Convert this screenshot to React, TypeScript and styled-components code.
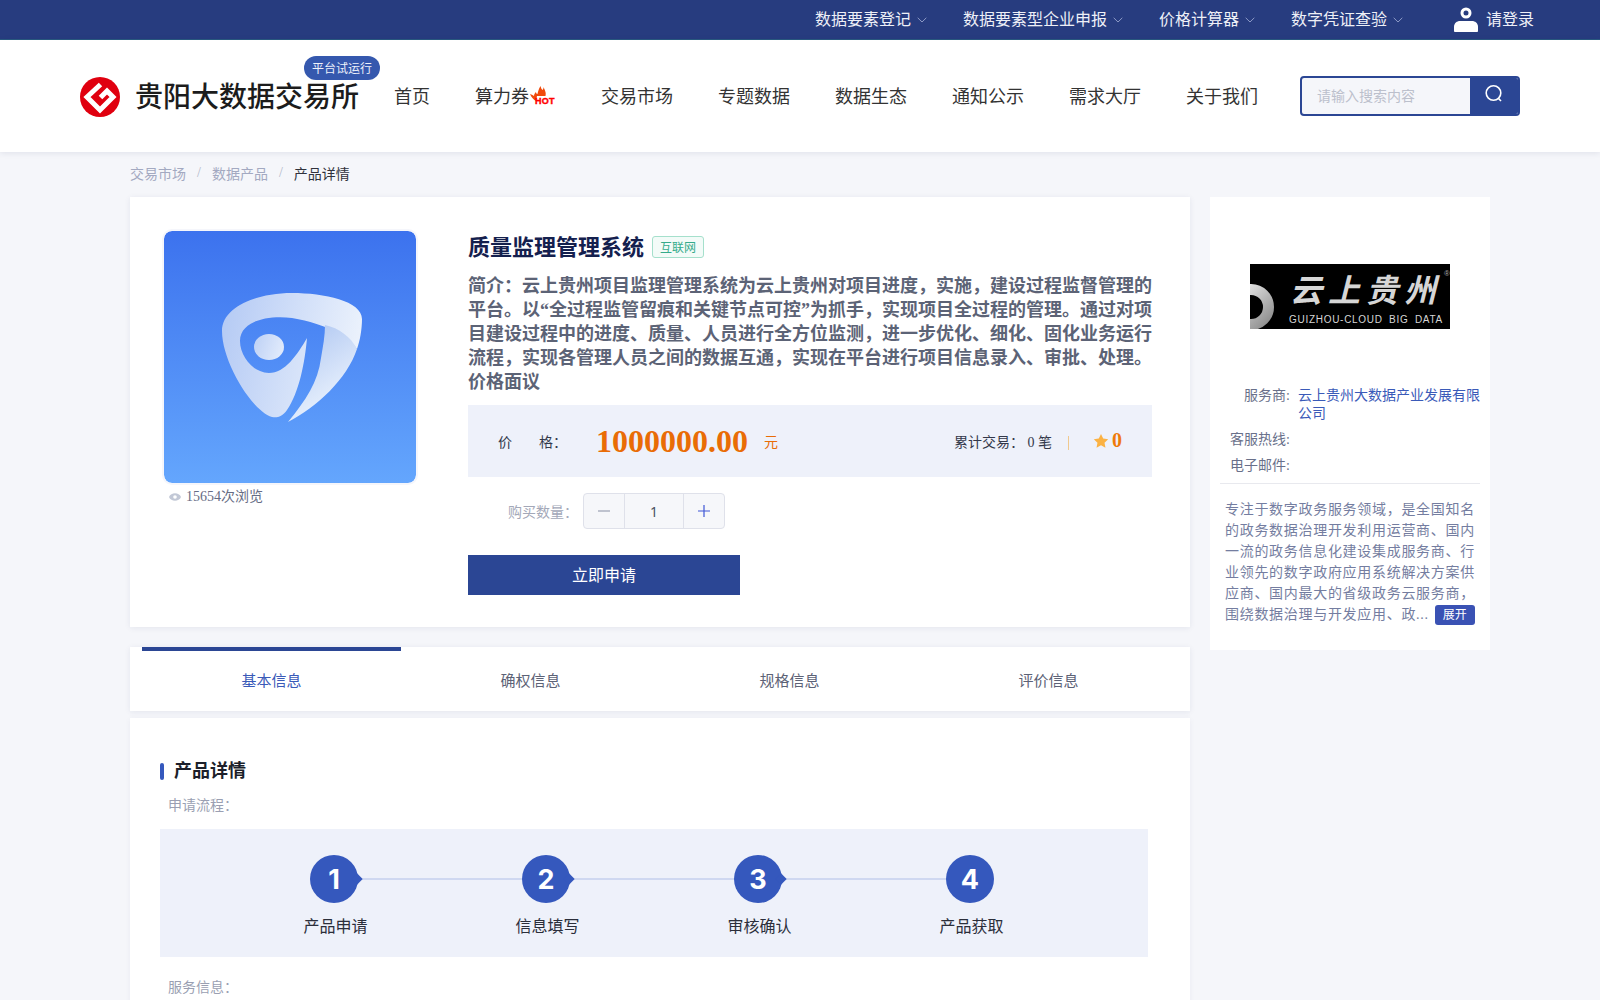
import React from 'react';
import styled, { createGlobalStyle } from 'styled-components';

const Global = createGlobalStyle`
  html, body { margin: 0; padding: 0; background: #f5f6fa; }
  body { font-family: "Liberation Serif", "Noto Sans CJK SC", serif; }
  * { box-sizing: border-box; }
`;
const Page = styled.div`
  width: 1600px; height: 1000px; overflow: hidden; background: #f5f6fa;
`;
const TopBar = styled.div`
  height: 40px; background: #273c7f; border-bottom: 1px solid #2a5a80;
  display: flex; justify-content: flex-end; align-items: center; padding-right: 66px;
`;
const TopItem = styled.div<{ $gap: number }>`
  display: flex; align-items: center; gap: 6px; color: #eef0f7; font-size: 16px; margin-right: ${p => p.$gap}px; line-height: 22px;
`;
const LoginText = styled.span`
  margin-left: 2px;
`;
const Header = styled.header`
  height: 112px; background: #fff; box-shadow: 0 1px 6px rgba(30,40,90,.1);
  display: flex; align-items: center; padding-left: 80px; position: relative;
`;
const LogoWrap = styled.div`
  display: flex; align-items: center; gap: 15px; width: 314px; position: relative; margin-top: 2px;
`;
const LogoText = styled.div`
  font-size: 28px; font-weight: 500; color: #1c1c1c; white-space: nowrap; letter-spacing: 0; margin-top: -5px;
`;
const TrialBadge = styled.span`
  position: absolute; left: 224px; top: -21px; width: 76px; height: 24px; border-radius: 12px;
  background: #3558ae; color: #eef2fb; font-size: 12px; display: flex; align-items: center; justify-content: center;
`;
const Nav = styled.nav`
  display: flex; align-items: center; gap: 45px; font-size: 18px; color: #333; margin-top: -2px;
`;
const NavLink = styled.a<{ $w?: number }>`
  position: relative; white-space: nowrap; ${p => p.$w ? `width: ${p.$w}px;` : ''}
`;
const Hot = styled.span`
  position: absolute; left: 55px; top: 4px; line-height: 0;
`;
const Search = styled.div`
  margin-left: 42px; width: 220px; height: 40px; border: 2px solid #2b4694; border-radius: 4px;
  display: flex; overflow: hidden; background: #f5f6fa;
`;
const SearchInput = styled.div`
  flex: 1; color: #bcc0cc; font-size: 14px; display: flex; align-items: center; padding: 0 0 2px 15px;
`;
const SearchBtn = styled.div`
  width: 48px; background: #2b4694; display: flex; align-items: flex-start; justify-content: center; padding-top: 5px;
`;
const Content = styled.div`
  padding-left: 130px; width: 1490px;
`;
const Crumbs = styled.div`
  height: 45px; display: flex; align-items: center; font-size: 14px; color: #a3a9c1; padding-bottom: 3px;
`;
const Sep = styled.span`
  margin: 0 11px; color: #b4b9ca;
`;
const CrumbNow = styled.span`
  color: #30323c;
`;
const Columns = styled.div`
  display: flex; gap: 20px; align-items: flex-start;
`;
const MainCol = styled.div`
  width: 1060px; display: flex; flex-direction: column;
`;
const ProductCard = styled.section`
  height: 430px; background: #fff; box-shadow: 0 1px 6px rgba(30,40,90,.08);
  display: flex; padding: 34px 38px 0 34px;
`;
const Gallery = styled.div`
  width: 304px; flex: none;
`;
const Views = styled.div`
  display: flex; align-items: center; gap: 5px; color: #666c84; font-size: 14px; margin: 6px 0 0 5px; line-height: 16px;
`;
const Info = styled.div`
  flex: 1; display: flex; flex-direction: column;
`;
const TitleRow = styled.div`
  display: flex; align-items: center; gap: 8px; height: 32px;
`;
const Title = styled.h1`
  margin: -5px 0 0; font-size: 22px; font-weight: 700; color: #14204e;
`;
const Tag = styled.span`
  width: 52px; height: 22px; border: 1px solid #a5e0cc; border-radius: 3px; background: #f3fbf8;
  color: #35ab8b; font-size: 12px; display: flex; align-items: center; justify-content: center;
`;
const Desc = styled.p`
  margin: 11px 0 0; font-size: 18px; line-height: 24px; font-weight: 700; color: #5c6376; height: 120px;
`;
const PriceBar = styled.div`
  margin-top: 11px; height: 72px; background: #eef1fa; display: flex; align-items: center; padding: 0 30px; color: #33384a; font-size: 14px;
`;
const PriceLabel = styled.span`
  width: 98px; display: flex; justify-content: space-between; padding-right: 29px; white-space: nowrap;
`;
const Price = styled.span`
  font-size: 32px; font-weight: 700; color: #e96c06; letter-spacing: 0;
`;
const Unit = styled.span`
  font-size: 14px; color: #e96c06; margin-left: 16px;
`;
const Stats = styled.div`
  margin-left: auto; display: flex; align-items: center; white-space: pre;
`;
const Divider = styled.span`
  width: 1px; height: 14px; background: #f0c98e; margin: 3px 24px 0 16px;
`;
const Score = styled.span`
  display: flex; align-items: center; gap: 3px; color: #ef7a0a; font-size: 20px; font-weight: 700; margin-top: -1px;
`;
const QtyRow = styled.div`
  display: flex; align-items: center; margin: 16px 0 0 40px;
`;
const QtyLabel = styled.span`
  width: 75px; font-size: 14px; color: #a3a8b8;
`;
const Stepper = styled.div`
  width: 142px; height: 36px; border: 1px solid #dfe1ea; border-radius: 4px; background: #f6f7fa; display: flex;
`;
const StepBtn = styled.div`
  width: 40px; display: flex; align-items: center; justify-content: center;
`;
const StepVal = styled.div`
  flex: 1; border-left: 1px solid #dfe1ea; border-right: 1px solid #dfe1ea; display: flex; align-items: center; justify-content: center;
  font-size: 14px; color: #4a4f60; font-family: "Noto Sans", sans-serif;
`;
const Apply = styled.button`
  margin-top: 26px; width: 272px; height: 40px; background: #2b4694; border: 0; color: #fff; font-size: 16px; font-family: inherit; padding: 0 0 2px;
`;
const Tabs = styled.div`
  margin-top: 20px; height: 64px; background: #fff; box-shadow: 0 1px 6px rgba(30,40,90,.08); display: flex; padding: 0 12px;
`;
const TabItem = styled.div<{ $on?: boolean }>`
  flex: 1; border-top: 4px solid ${p => p.$on ? '#2b4694' : 'transparent'}; color: ${p => p.$on ? '#3a5ab8' : '#5c6276'};
  font-size: 15px; display: flex; align-items: center; justify-content: center; padding-bottom: 3px;
`;
const Detail = styled.section`
  margin-top: 7px; height: 400px; background: #fff; padding: 43px 30px 0 30px; box-shadow: 0 1px 6px rgba(30,40,90,.05);
`;
const SectionTitle = styled.h2`
  margin: 0; font-size: 18px; font-weight: 700; color: #1c1f2a; display: flex; align-items: center; gap: 10px; line-height: 20px;
  &::before { content: ''; width: 4px; height: 17px; background: #3558bd; border-radius: 2px; }
`;
const SubLabel = styled.div<{ $top: number }>`
  margin: ${p => p.$top}px 0 0 8px; font-size: 14px; color: #9a9fb2; line-height: 20px;
`;
const Flow = styled.div`
  margin-top: 13px; width: 988px; height: 128px; background: #eef1fa; display: flex; padding: 26px 0 0 68px;
`;
const Step = styled.div<{ $line: boolean }>`
  width: 212px; display: flex; flex-direction: column; align-items: center; position: relative;
  ${p => p.$line ? `&::after { content: ''; position: absolute; left: 130px; width: 188px; top: 23px; height: 2px; background: #cfd8f1; }` : ''}
`;
const Circle = styled.div<{ $tip: boolean }>`
  width: 48px; height: 48px; border-radius: 50%; background: #3558bd; color: #fff; position: relative; z-index: 1;
  display: flex; align-items: center; justify-content: center; font: 700 27px "Inter", "Liberation Sans", sans-serif;
  ${p => p.$tip ? `&::after { content: ''; position: absolute; right: -3px; top: 20px; width: 8px; height: 8px; background: #3558bd; transform: rotate(45deg); }` : ''}
`;
const StepName = styled.div`
  margin: 14px 0 0 3px; font-size: 16px; color: #2b2e3a; line-height: 20px;
`;
const Side = styled.aside`
  width: 280px; height: 453px; background: #fff; padding: 67px 10px 0 10px; display: flex; flex-direction: column;
`;
const SideLogo = styled.div`
  margin-left: 30px; width: 200px; height: 65px; background: #000; position: relative; overflow: hidden; color: #d6d6d6;
  display: flex; flex-direction: column; align-items: center; padding: 5px 0 0 32px;
`;
const SideLogoCn = styled.div`
  font-size: 32px; line-height: 44px; letter-spacing: 6px; font-weight: 700; font-style: italic; white-space: nowrap;
`;
const SideLogoEn = styled.div`
  font: 10px/14px "Liberation Sans", sans-serif; letter-spacing: .7px; white-space: nowrap; word-spacing: 3px;
`;
const Ring = styled.svg`
  position: absolute; left: 0; bottom: 0;
`;
const Reg = styled.span`
  position: absolute; right: 0; top: 5px; font: 8px "Liberation Sans", sans-serif; color: #aaa;
`;
const Facts = styled.dl`
  margin: 58px 0 0; padding: 0 0 8px; border-bottom: 1px solid #e8e9ee; display: grid; grid-template-columns: 70px 1fr; column-gap: 8px; row-gap: 8px; font-size: 14px; line-height: 18px;
`;
const FactKey = styled.dt`
  text-align: right; color: #69708a;
`;
const FactVal = styled.dd`
  margin: 0; color: #3a5ab8; min-height: 18px;
`;
const About = styled.p`
  margin: 15px 0 0 5px; width: 254px; font-size: 14px; line-height: 21px; letter-spacing: .7px; color: #747da0;
`;
const More = styled.span`
  display: inline-flex; vertical-align: top; margin: 1px 0 0 6px; width: 40px; height: 20px; border-radius: 3px; background: #3a52b4; color: #fff; font-size: 12px; letter-spacing: 0;
  align-items: center; justify-content: center; line-height: 1;
`;

const Caret = () => (
  <svg width="10" height="6" viewBox="0 0 10 6" fill="none"><path d="M.7.8 5 5 9.3.8" stroke="#8d9ac6" strokeWidth="1" /></svg>
);
const User = () => (
  <svg width="24" height="26" viewBox="0 0 24 26"><circle cx="12" cy="6" r="4" fill="none" stroke="#fff" strokeWidth="3" /><path d="M1 25c-.5 0-1-.5-1-1v-4c0-4 3-6 6-6h12c3 0 6 2 6 6v4c0 .5-.5 1-1 1z" fill="#fff" /></svg>
);
const GLogo = () => (
  <svg width="40" height="40" viewBox="0 0 40 40">
    <circle cx="20" cy="20" r="20" fill="#e0000f" />
    <path d="M20.500 7.500 7 20l13 13 13-13-6-6-6.500 6.500" fill="none" stroke="#fff" strokeWidth="5" />
  </svg>
);
const Flame = () => (
  <svg width="26" height="20" viewBox="0 0 26 20">
    <path d="M0 8c2 1 3 1 4 2 0-2 1-3 2-4 0 1 .5 2 1.500 2 .5-2 1-5 3-8 .5 2 1 3 2 4 1-1 1-2 1-3 1 3 3 5 2 9H7l-1 5C4 14 1 11 0 8z" fill="#f04a0c" />
    <text x="5" y="18" fontFamily="Liberation Sans, sans-serif" fontWeight="700" fontSize="9" fill="#f00" stroke="#f00" strokeWidth=".4" letterSpacing=".3">HOT</text>
  </svg>
);
const Mag = () => (
  <svg width="22" height="22" viewBox="0 0 22 22" fill="none"><circle cx="10.500" cy="10" r="7.300" stroke="#fff" strokeWidth="1.600" /><path d="m15.500 15.500 2.500 2.500" stroke="#fff" strokeWidth="1.600" /></svg>
);
const Minus = () => (
  <svg width="12" height="12" viewBox="0 0 12 12"><path d="M0 6h12" stroke="#9aa0b2" strokeWidth="1.200" /></svg>
);
const Plus = () => (
  <svg width="12" height="12" viewBox="0 0 12 12"><path d="M0 6h12M6 0v12" stroke="#3f57d6" strokeWidth="1.200" /></svg>
);
const ProductArt = () => (
  <svg width="252" height="252" viewBox="0 0 252 252" style={{ display: 'block', borderRadius: 8, outline: '2px solid #f5f6fb' }}>
    <defs>
      <linearGradient id="bg" x1="0" y1="0" x2="0" y2="1"><stop offset="0" stopColor="#3c72ee" /><stop offset="1" stopColor="#64a6fd" /></linearGradient>
      <linearGradient id="a" x1="0" y1="0" x2="1" y2=".2"><stop offset="0" stopColor="#b3c9f4" /><stop offset="1" stopColor="#eaf1fc" /></linearGradient>
      <linearGradient id="b" x1="0" y1="0" x2=".5" y2="1"><stop offset="0" stopColor="#a9c2f0" /><stop offset="1" stopColor="#eef5fe" /></linearGradient>
      <linearGradient id="c" x1="0" y1="0" x2="1" y2=".3"><stop offset="0" stopColor="#bcd0f5" /><stop offset="1" stopColor="#dfe9fb" /></linearGradient>
    </defs>
    <rect width="252" height="252" fill="url(#bg)" />
    <g style={{ filter: 'blur(.6px)' }}>
      <path d="M58 100C58 76 92 62 128 62c32 0 70 8 70 26 0 10-2 22-5 30-8-12-30-25-65-31-22-3-52 2-52 23 0 16 14 32 29 32 16 0 28-18 38-35-2 24-8 55-20 72-5 7-10 8-15 7-20-6-50-55-50-86z" fill="url(#a)" />
      <path d="M161 94c14 3 26 12 32 24-10 30-40 58-69 73 18-22 30-40 33-64 2-12 4-22 4-33z" fill="url(#b)" />
      <ellipse cx="105" cy="116" rx="15" ry="13" fill="url(#c)" />
    </g>
  </svg>
);
const Eye = () => (
  <svg width="12" height="8" viewBox="0 0 12 8"><path d="M0 4c2-5 10-5 12 0-2 5-10 5-12 0z" fill="#c2c8d6" /><circle cx="6" cy="4" r="1.800" fill="#fff" /></svg>
);
const Star = () => (
  <svg width="16" height="16" viewBox="0 0 24 24"><path d="m12 1.500 3.300 6.900 7.500 1-5.500 5.200 1.400 7.500L12 18.400l-6.700 3.700 1.400-7.500L1.200 9.400l7.500-1z" fill="#fbb243" /></svg>
);

const topItems = [
  { t: '数据要素登记', g: 36 }, { t: '数据要素型企业申报', g: 36 }, { t: '价格计算器', g: 36 }, { t: '数字凭证查验', g: 51 },
];
const navItems = ['首页', '算力券', '交易市场', '专题数据', '数据生态', '通知公示', '需求大厅', '关于我们'];
const tabs = ['基本信息', '确权信息', '规格信息', '评价信息'];
const steps = ['产品申请', '信息填写', '审核确认', '产品获取'];

export default function App() {
  return (
    <Page>
      <Global />
      <TopBar>
        {topItems.map(i => <TopItem key={i.t} $gap={i.g}>{i.t}<Caret /></TopItem>)}
        <TopItem $gap={0}><User /><LoginText>请登录</LoginText></TopItem>
      </TopBar>
      <Header>
        <LogoWrap>
          <GLogo />
          <LogoText>贵阳大数据交易所</LogoText>
          <TrialBadge>平台试运行</TrialBadge>
        </LogoWrap>
        <Nav>
          {navItems.map(n => (
            <NavLink key={n} $w={n === '算力券' ? 81 : undefined}>
              {n}{n === '算力券' && <Hot><Flame /></Hot>}
            </NavLink>
          ))}
        </Nav>
        <Search>
          <SearchInput>请输入搜索内容</SearchInput>
          <SearchBtn><Mag /></SearchBtn>
        </Search>
      </Header>
      <Content>
        <Crumbs>交易市场<Sep>/</Sep>数据产品<Sep>/</Sep><CrumbNow>产品详情</CrumbNow></Crumbs>
        <Columns>
          <MainCol>
            <ProductCard>
              <Gallery>
                <ProductArt />
                <Views><Eye />15654次浏览</Views>
              </Gallery>
              <Info>
                <TitleRow><Title>质量监理管理系统</Title><Tag>互联网</Tag></TitleRow>
                <Desc>简介：云上贵州项目监理管理系统为云上贵州对项目进度，实施，建设过程监督管理的平台。以“全过程监管留痕和关键节点可控”为抓手，实现项目全过程的管理。通过对项目建设过程中的进度、质量、人员进行全方位监测，进一步优化、细化、固化业务运行流程，实现各管理人员之间的数据互通，实现在平台进行项目信息录入、审批、处理。价格面议</Desc>
                <PriceBar>
                  <PriceLabel><span>价</span><span>格：</span></PriceLabel>
                  <Price>1000000.00</Price><Unit>元</Unit>
                  <Stats><span>累计交易： 0 笔</span><Divider /><Score><Star />0</Score></Stats>
                </PriceBar>
                <QtyRow>
                  <QtyLabel>购买数量：</QtyLabel>
                  <Stepper><StepBtn><Minus /></StepBtn><StepVal>1</StepVal><StepBtn><Plus /></StepBtn></Stepper>
                </QtyRow>
                <Apply>立即申请</Apply>
              </Info>
            </ProductCard>
            <Tabs>{tabs.map((t, i) => <TabItem key={t} $on={i === 0}>{t}</TabItem>)}</Tabs>
            <Detail>
              <SectionTitle>产品详情</SectionTitle>
              <SubLabel $top={15}>申请流程：</SubLabel>
              <Flow>
                {steps.map((s, i) => (
                  <Step key={s} $line={i < 3}><Circle $tip={i < 3}>{i + 1}</Circle><StepName>{s}</StepName></Step>
                ))}
              </Flow>
              <SubLabel $top={21}>服务信息：</SubLabel>
            </Detail>
          </MainCol>
          <Side>
            <SideLogo>
              <Ring width="26" height="56" viewBox="0 0 26 56">
                <defs><linearGradient id="ring" x1="0" y1="0" x2="1" y2="1"><stop offset="0" stopColor="#f0f0f0" /><stop offset="1" stopColor="#8d8d8d" /></linearGradient></defs>
                <circle cx="1" cy="34" r="17.500" fill="none" stroke="url(#ring)" strokeWidth="11" />
              </Ring>
              <SideLogoCn>云上贵州</SideLogoCn>
              <SideLogoEn>GUIZHOU-CLOUD BIG DATA</SideLogoEn>
              <Reg>®</Reg>
            </SideLogo>
            <Facts>
              <FactKey>服务商:</FactKey><FactVal>云上贵州大数据产业发展有限公司</FactVal>
              <FactKey>客服热线:</FactKey><FactVal />
              <FactKey>电子邮件:</FactKey><FactVal />
            </Facts>
            <About>
              专注于数字政务服务领域，是全国知名的政务数据治理开发利用运营商、国内一流的政务信息化建设集成服务商、行业领先的数字政府应用系统解决方案供应商、国内最大的省级政务云服务商，围绕数据治理与开发应用、政...
              <More>展开</More>
            </About>
          </Side>
        </Columns>
      </Content>
    </Page>
  );
}
